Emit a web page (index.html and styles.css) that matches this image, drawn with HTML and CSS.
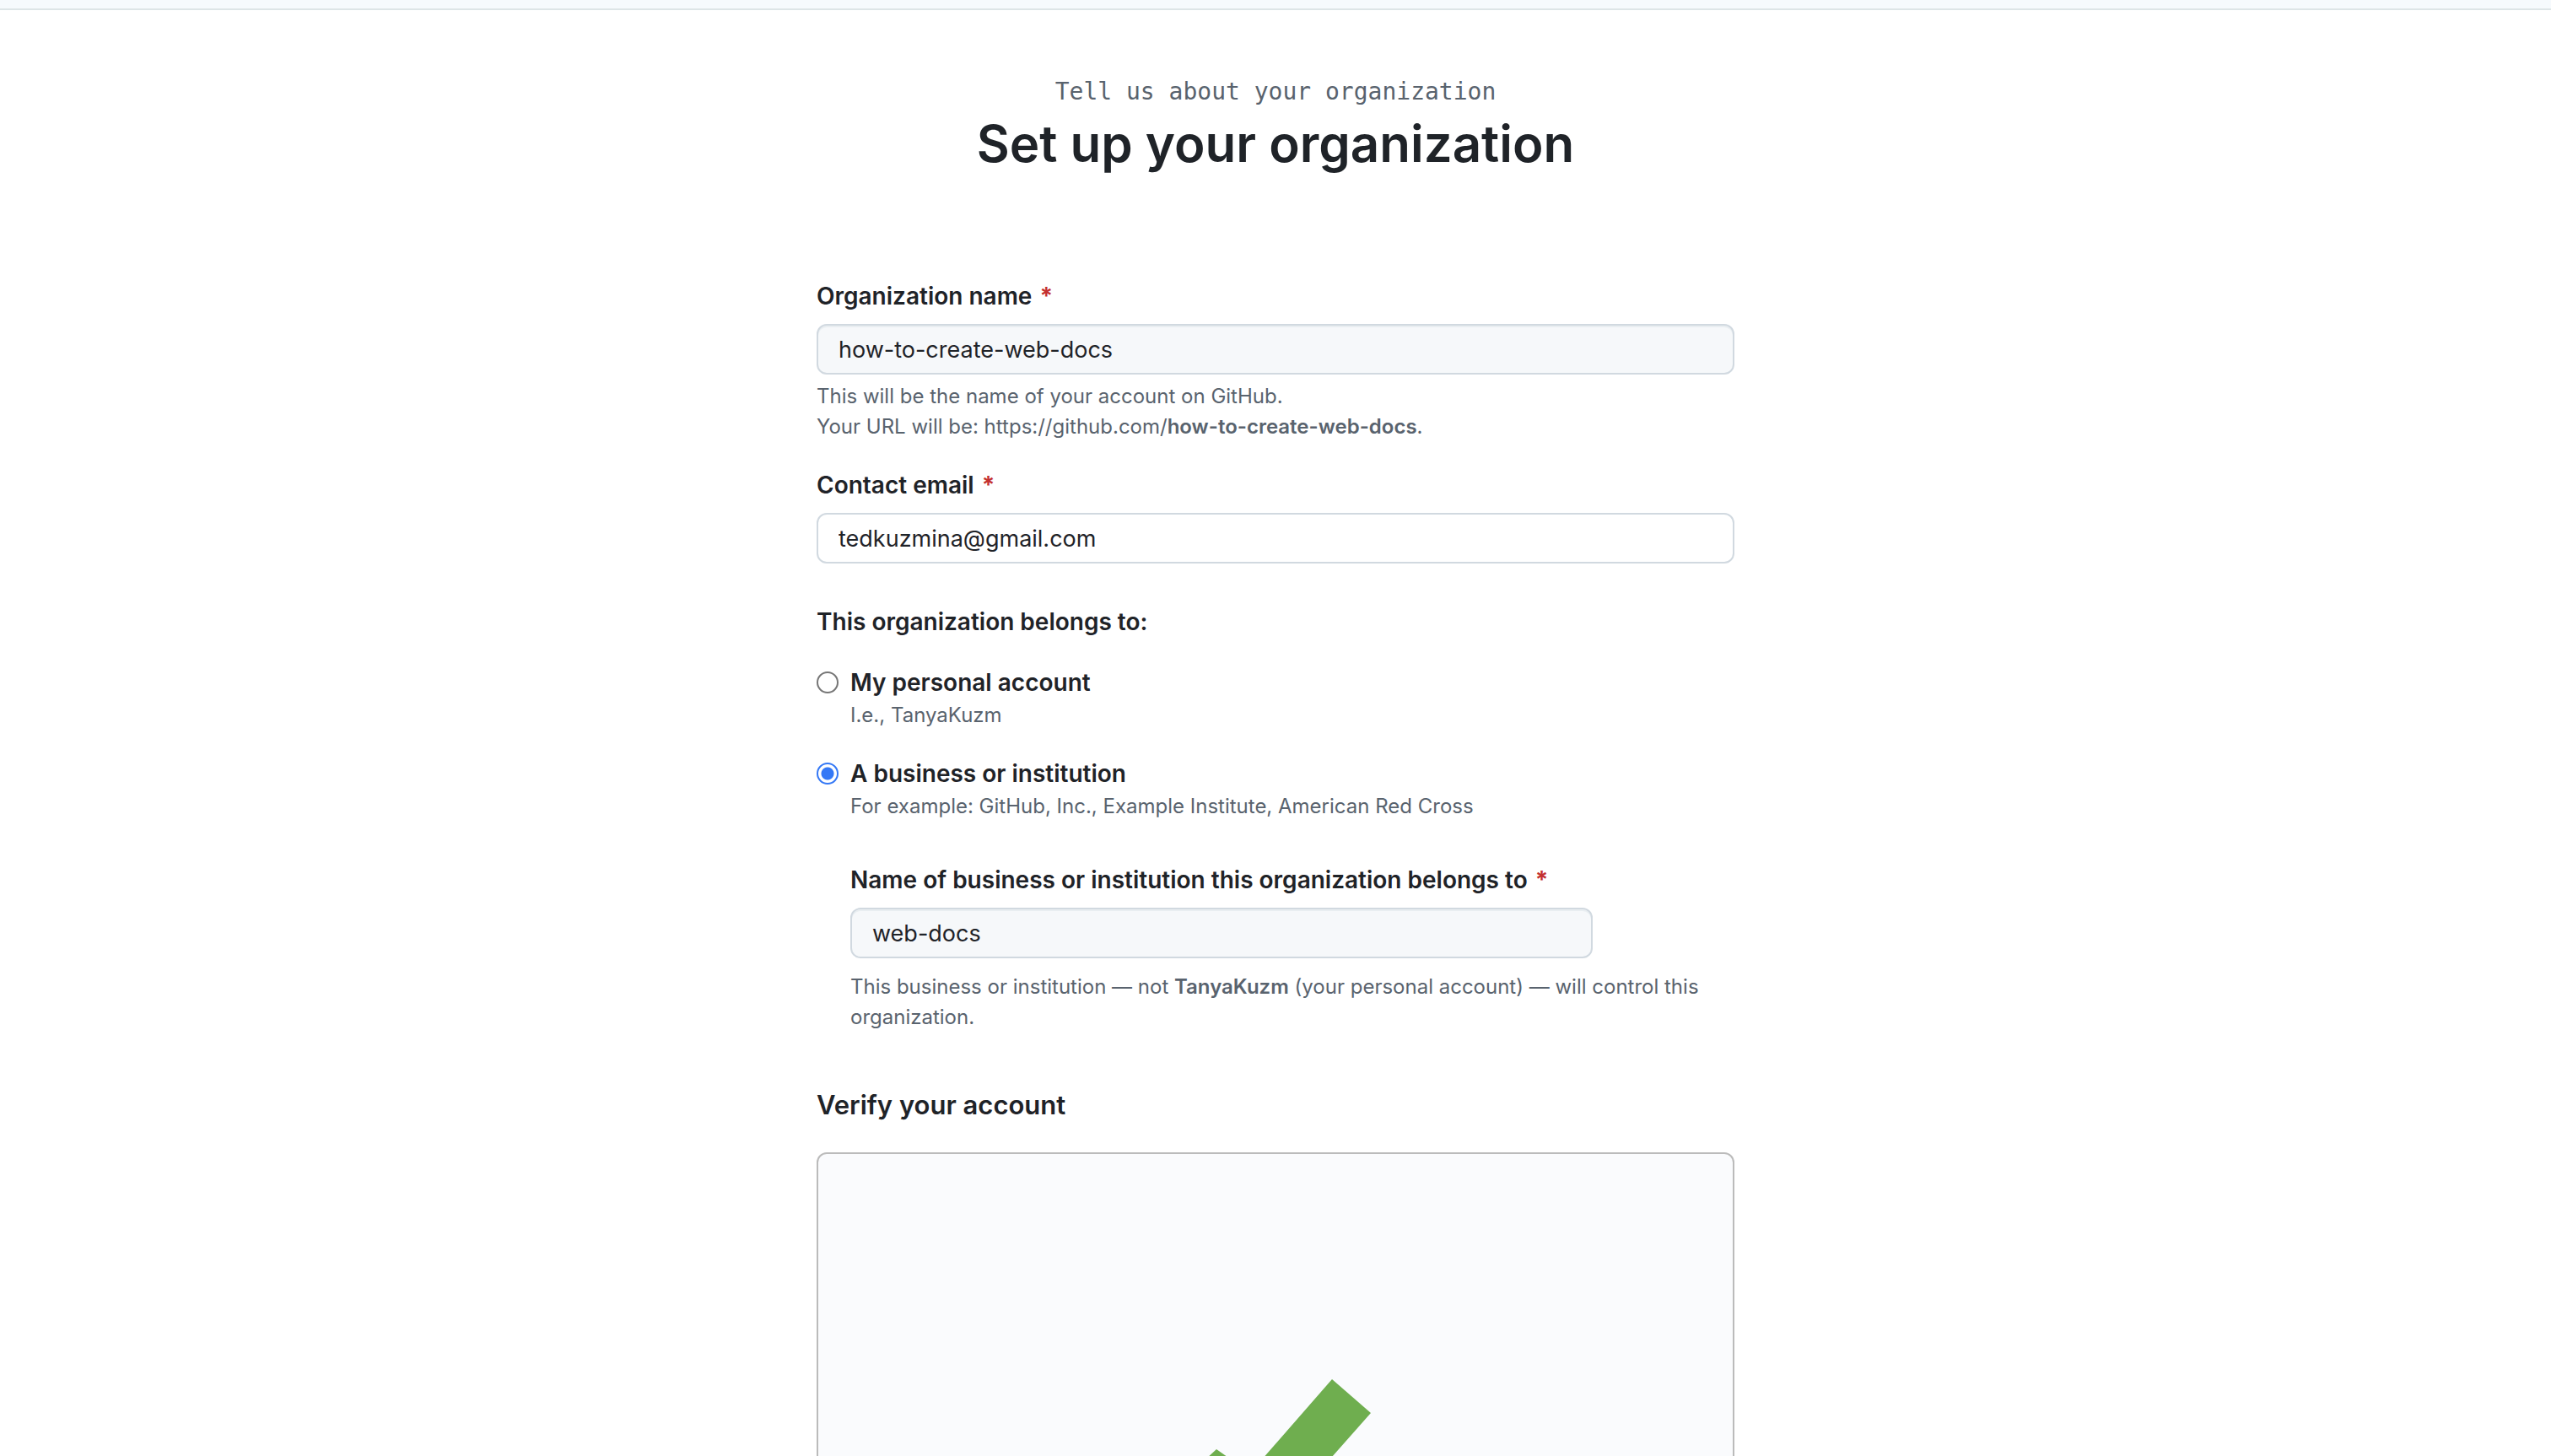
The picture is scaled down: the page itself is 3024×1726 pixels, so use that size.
FILE: index.html
```html
<!DOCTYPE html>
<html lang="en">
<head>
<meta charset="utf-8">
<title>Set up your organization</title>
<link rel="stylesheet" href="styles.css">
</head>
<body>
<header class="topbar"></header>
<main class="page">
  <div class="intro">
    <p class="eyebrow">Tell us about your organization</p>
    <h1 class="title">Set up your organization</h1>
  </div>
  <form class="form">
    <div class="field">
      <label class="label" for="org-name">Organization name <span class="required">*</span></label>
      <input class="input filled" id="org-name" type="text" value="how-to-create-web-docs">
      <p class="note">This will be the name of your account on GitHub.<br>Your URL will be: https://github.com/<strong>how-to-create-web-docs</strong>.</p>
    </div>
    <div class="field">
      <label class="label" for="email">Contact email <span class="required">*</span></label>
      <input class="input" id="email" type="email" value="tedkuzmina@gmail.com">
    </div>
    <fieldset class="owner">
      <legend class="label">This organization belongs to:</legend>
      <div class="choice">
        <input class="radio" type="radio" name="owner" id="personal">
        <div>
          <label class="label" for="personal">My personal account</label>
          <p class="hint">I.e., TanyaKuzm</p>
        </div>
      </div>
      <div class="choice">
        <input class="radio" type="radio" name="owner" id="business" checked>
        <div>
          <label class="label" for="business">A business or institution</label>
          <p class="hint">For example: GitHub, Inc., Example Institute, American Red Cross</p>
        </div>
      </div>
    </fieldset>
    <div class="business">
      <label class="label" for="business-name">Name of business or institution this organization belongs to <span class="required">*</span></label>
      <input class="input filled short" id="business-name" type="text" value="web-docs">
      <p class="hint control">This business or institution — not <strong>TanyaKuzm</strong> (your personal account) — will control this organization.</p>
    </div>
    <section class="verify">
      <h2 class="subtitle">Verify your account</h2>
      <div class="panel">
        <svg class="check" viewBox="0 0 254 200" role="img" aria-label="Verified">
          <path d="M194 0 240 40 102 196 15 122 57 83 97 111Z" fill="#6fae4f"/>
        </svg>
      </div>
    </section>
  </form>
</main>
</body>
</html>
```
FILE: styles.css
```css
* { box-sizing: border-box; }

body {
  margin: 0;
  height: 100vh;
  overflow: hidden;
  background: #fff;
  color: #1f2328;
  font: 28px/42px Inter, "Liberation Sans", sans-serif;
}

p, h1, h2 { margin: 0; }

.topbar {
  height: 12px;
  background: #f6fafd;
  border-bottom: 2px solid #dde5e7;
}

.page {
  max-width: 1088px;
  margin: 0 auto;
  padding-top: 76px;
}

.intro {
  text-align: center;
  margin-bottom: 120px;
}

.eyebrow {
  color: #59636e;
  font-family: "DejaVu Sans Mono", monospace;
}

.title {
  font-size: 60px;
  line-height: 80px;
  font-weight: 600;
}

.field { margin-bottom: 30px; }

.label {
  display: block;
  padding: 0;
  font-weight: 600;
}

.required {
  margin-left: 2px;
  color: #c4302f;
  font-weight: 700;
}

.input {
  display: block;
  width: 100%;
  height: 60px;
  margin-top: 12px;
  padding: 0 24px;
  border: 2px solid #d1d9e0;
  border-radius: 12px;
  background: #fff;
  color: inherit;
  font: inherit;
  font-size: 27px;
}

.filled {
  background: #f6f8fa;
  box-shadow: inset 0 2px 0 #e9eef1;
}

.short { max-width: 880px; }

.note,
.hint {
  color: #59636e;
  font-size: 24px;
  line-height: 36px;
}

.note { margin-top: 8px; }

strong { font-weight: 600; }

.owner {
  margin: 48px 0;
  padding: 0;
  border: 0;
}

.choice {
  display: flex;
  gap: 14px;
  margin-top: 30px;
}

.radio {
  appearance: none;
  flex: none;
  width: 26px;
  height: 26px;
  margin: 8px 0 0;
  border: 2px solid #767676;
  border-radius: 50%;
  background: #fff;
}

.radio:checked {
  border-color: #3478f6;
  background: radial-gradient(circle, #3478f6 7px, #fff 8px);
}

.business { padding-left: 40px; }

.control { margin-top: 16px; }

.verify { margin-top: 62px; }

.subtitle {
  font-size: 31px;
  line-height: 48px;
  font-weight: 600;
}

.panel {
  display: flex;
  justify-content: center;
  height: 600px;
  margin-top: 32px;
  padding-top: 267px;
  border: 2px solid #bbb;
  border-radius: 12px;
  background: #fafbfd;
}

.check {
  width: 254px;
  height: 200px;
}
```
